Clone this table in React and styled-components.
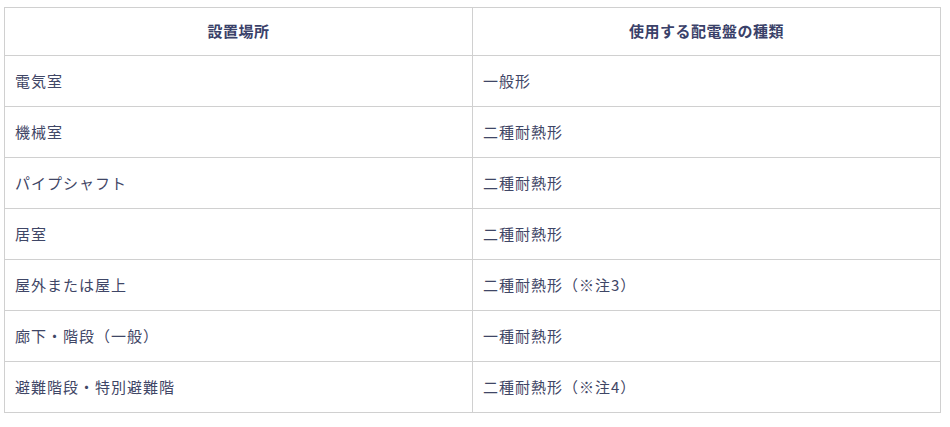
import React from "react";
import styled, { createGlobalStyle } from "styled-components";

const GlobalStyle = createGlobalStyle`
  body {
    margin: 0;
    background: #fff;
    font-family: "Noto Sans CJK JP", "Noto Sans", sans-serif;
  }
`;

const Wrapper = styled.div`
  padding: 7px 10px 0 4px;
`;

const Table = styled.table`
  width: 937px;
  border-collapse: collapse;
  table-layout: fixed;
  font-size: 15px;
  letter-spacing: 1px;
  color: #3f4666;
`;

const HeadCell = styled.th`
  border: 1px solid #d0d0d0;
  padding: 13px 10px 15px;
  line-height: 19px;
  font-weight: bold;
  letter-spacing: 0.5px;
  text-align: center;
  color: #3a4169;
`;

const Cell = styled.td`
  border: 1px solid #d0d0d0;
  padding: 15px 10px 16px;
  line-height: 19px;
  text-align: left;
`;

const rows = [
  ["電気室", "一般形"],
  ["機械室", "二種耐熱形"],
  ["パイプシャフト", "二種耐熱形"],
  ["居室", "二種耐熱形"],
  ["屋外または屋上", "二種耐熱形（※注3）"],
  ["廊下・階段（一般）", "一種耐熱形"],
  ["避難階段・特別避難階", "二種耐熱形（※注4）"],
];

const App = () => {
  return (
    <Wrapper>
      <GlobalStyle />
      <Table>
        <thead>
          <tr>
            <HeadCell>設置場所</HeadCell>
            <HeadCell>使用する配電盤の種類</HeadCell>
          </tr>
        </thead>
        <tbody>
          {rows.map(([place, type]) => (
            <tr key={place}>
              <Cell>{place}</Cell>
              <Cell>{type}</Cell>
            </tr>
          ))}
        </tbody>
      </Table>
    </Wrapper>
  );
};

export default App;
